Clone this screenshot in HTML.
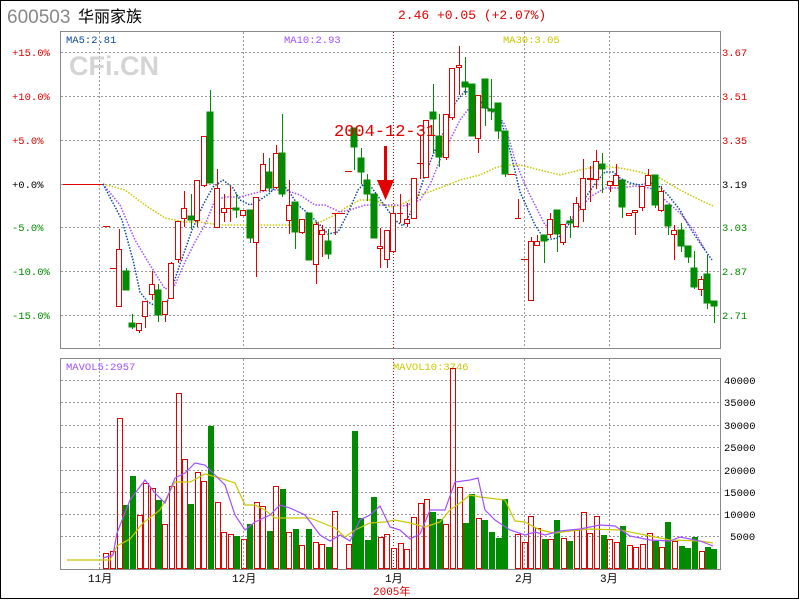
<!DOCTYPE html>
<html><head><meta charset="utf-8"><style>
html,body{margin:0;padding:0;background:#fff}
body{width:800px;height:600px;overflow:hidden}
svg text{font-family:"Liberation Mono",monospace}
</style></head><body>
<svg width="800" height="600" viewBox="0 0 800 600" xmlns="http://www.w3.org/2000/svg" shape-rendering="crispEdges">
<rect x="0.5" y="0.5" width="798" height="598" fill="#fff" stroke="#000"/>
<text x="7" y="23" font-size="19" fill="#888" style="font-family:'Liberation Sans',sans-serif">600503</text>
<text x="78" y="22" font-size="16" fill="#000" style="font-family:'Liberation Sans','Noto Sans CJK SC',sans-serif">华丽家族</text>
<text x="398" y="19" font-size="13" fill="#e00000">2.46 +0.05 (+2.07%)</text>
<rect x="60.5" y="31.5" width="660" height="317" fill="none" stroke="#888"/>
<rect x="60.5" y="358.5" width="660" height="211" fill="none" stroke="#888"/>
<g stroke="#999" stroke-dasharray="2,2">
<line x1="61" y1="52.5" x2="720" y2="52.5"/><line x1="61" y1="96.5" x2="720" y2="96.5"/><line x1="61" y1="140.5" x2="720" y2="140.5"/><line x1="61" y1="184.5" x2="720" y2="184.5"/><line x1="61" y1="227.5" x2="720" y2="227.5"/><line x1="61" y1="271.5" x2="720" y2="271.5"/><line x1="61" y1="315.5" x2="720" y2="315.5"/>
<line x1="61" y1="380.5" x2="720" y2="380.5"/><line x1="61" y1="402.5" x2="720" y2="402.5"/><line x1="61" y1="425.5" x2="720" y2="425.5"/><line x1="61" y1="447.5" x2="720" y2="447.5"/><line x1="61" y1="470.5" x2="720" y2="470.5"/><line x1="61" y1="492.5" x2="720" y2="492.5"/><line x1="61" y1="514.5" x2="720" y2="514.5"/><line x1="61" y1="536.5" x2="720" y2="536.5"/>
<line x1="99.5" y1="32" x2="99.5" y2="348"/><line x1="243.5" y1="32" x2="243.5" y2="348"/><line x1="524.5" y1="32" x2="524.5" y2="348"/><line x1="609.5" y1="32" x2="609.5" y2="348"/>
<line x1="99.5" y1="359" x2="99.5" y2="569"/><line x1="243.5" y1="359" x2="243.5" y2="569"/><line x1="524.5" y1="359" x2="524.5" y2="569"/><line x1="609.5" y1="359" x2="609.5" y2="569"/>
</g>
<g stroke="#e00000" stroke-dasharray="1,2"><line x1="393.5" y1="32" x2="393.5" y2="348"/><line x1="393.5" y1="359" x2="393.5" y2="569"/></g>
<text x="69" y="75" font-size="27" font-weight="bold" fill="#d4d4d4" style="font-family:'Liberation Sans',sans-serif">CFi.CN</text>
<g font-size="10.5">
<text x="12" y="56" fill="#e00000">+15.0%</text><text x="12" y="100" fill="#e00000">+10.0%</text><text x="12" y="144" fill="#e00000">+5.0%</text><text x="12" y="188" fill="#000">+0.0%</text><text x="12" y="231" fill="#008c00">-5.0%</text><text x="12" y="275" fill="#008c00">-10.0%</text><text x="12" y="319" fill="#008c00">-15.0%</text>
<text x="722" y="56" fill="#e00000">3.67</text><text x="722" y="100" fill="#e00000">3.51</text><text x="722" y="144" fill="#e00000">3.35</text><text x="722" y="188" fill="#000">3.19</text><text x="722" y="231" fill="#008c00">3.03</text><text x="722" y="275" fill="#008c00">2.87</text><text x="722" y="319" fill="#008c00">2.71</text>
<text x="724" y="384" fill="#000">40000</text><text x="724" y="406" fill="#000">35000</text><text x="724" y="429" fill="#000">30000</text><text x="724" y="451" fill="#000">25000</text><text x="724" y="474" fill="#000">20000</text><text x="724" y="496" fill="#000">15000</text><text x="724" y="518" fill="#000">10000</text><text x="730" y="540" fill="#000">5000</text>
<text x="66" y="43" fill="#0a4a9a">MA5:2.81</text><text x="284" y="43" fill="#a050ff">MA10:2.93</text><text x="503" y="43" fill="#c8c800">MA30:3.05</text>
<text x="66" y="370" fill="#a050ff">MAVOL5:2957</text><text x="393" y="370" fill="#c8c800">MAVOL10:3746</text>
</g>
<g font-size="11" fill="#000" style="font-family:'Liberation Sans','Noto Sans CJK SC',sans-serif">
<text x="88" y="582">11月</text><text x="232" y="582">12月</text><text x="385" y="582">1月</text><text x="515" y="582">2月</text><text x="600" y="582">3月</text>
<text x="373" y="595" fill="#e00000">2005年</text>
</g>
<line x1="63" y1="184.5" x2="103" y2="184.5" stroke="#e00000"/>
<g fill="none" stroke-dasharray="1.5,1.5" shape-rendering="auto" stroke-width="1.5">
<polyline stroke="#c8c800" points="103,184 125,190 145,205 165,218 185,222 200,222 220,225 245,225 270,225 300,225 320,222 335,215 345,208 360,200 375,200 390,207 400,205 420,195 440,188 460,180 480,175 495,168 505,165 520,165 540,170 560,175 580,170 600,166 620,168 640,172 660,178 680,190 700,200 713,206"/>
<polyline stroke="#a050ff" points="103,184 120,205 135,240 150,265 165,289 175,285 185,262 195,242 205,225 215,200 225,197 240,197 255,193 270,190 285,190 300,195 315,205 325,205 340,212 350,210 365,205 395,205 405,206 420,200 430,185 440,160 450,140 460,120 470,107 480,107 495,110 505,125 515,160 525,185 535,205 545,225 560,230 575,215 590,197 605,188 620,188 635,186 650,188 665,200 680,213 695,232 705,250"/>
<polyline stroke="#0a4a9a" points="103,184 122,220 133,260 140,292 148,302 158,307 168,300 178,270 192,230 203,205 213,187 223,180 233,188 240,200 250,205 260,200 270,193 280,182 288,190 298,205 310,215 320,225 328,234 338,232 348,213 358,190 365,183 372,188 382,202 395,220 403,226 415,205 425,175 435,150 445,130 455,103 465,91 473,95 485,106 500,117 510,150 520,192 535,225 545,240 558,238 565,230 575,215 585,198 598,180 605,172 613,172 620,178 630,183 640,185 650,183 660,187 668,195 680,210 690,228 700,243 712,260"/>
</g>
<g stroke="#e00000" fill="#fff">
<line x1="103" y1="226.5" x2="110" y2="226.5"/><line x1="110" y1="268.5" x2="116" y2="268.5"/>
<line x1="119.5" y1="229" x2="119.5" y2="307"/><rect x="116.5" y="249.5" width="5" height="57"/>
<line x1="139.5" y1="323" x2="139.5" y2="333"/><rect x="136.5" y="323.5" width="5" height="7"/>
<line x1="145.5" y1="301" x2="145.5" y2="328"/><rect x="142.5" y="301.5" width="5" height="15"/>
<line x1="152.5" y1="271" x2="152.5" y2="300"/><rect x="149.5" y="284.5" width="5" height="10"/>
<line x1="165.5" y1="301" x2="165.5" y2="322"/><rect x="162.5" y="301.5" width="5" height="13"/>
<line x1="171.5" y1="262" x2="171.5" y2="298"/><rect x="168.5" y="263.5" width="5" height="35"/>
<line x1="178.5" y1="221" x2="178.5" y2="263"/><rect x="175.5" y="221.5" width="5" height="38"/>
<line x1="184.5" y1="191" x2="184.5" y2="227"/><rect x="181.5" y="208.5" width="5" height="10"/>
<line x1="197.5" y1="180" x2="197.5" y2="227"/><rect x="194.5" y="180.5" width="5" height="40"/>
<line x1="204.5" y1="136" x2="204.5" y2="187"/><rect x="201.5" y="136.5" width="5" height="49"/>
<line x1="217.5" y1="169" x2="217.5" y2="227"/><rect x="214.5" y="188.5" width="5" height="39"/>
<line x1="224.5" y1="194" x2="224.5" y2="222"/><rect x="221.5" y="208.5" width="5" height="4"/>
<line x1="230.5" y1="186" x2="230.5" y2="222"/><line x1="227" y1="208.5" x2="233" y2="208.5"/>
<rect x="240.5" y="210.5" width="5" height="5"/>
<line x1="256.5" y1="197" x2="256.5" y2="277"/><rect x="253.5" y="197.5" width="5" height="45"/>
<line x1="263.5" y1="153" x2="263.5" y2="190"/><rect x="260.5" y="164.5" width="5" height="26"/>
<line x1="276.5" y1="145" x2="276.5" y2="189"/><rect x="273.5" y="153.5" width="5" height="34"/>
<line x1="289.5" y1="180" x2="289.5" y2="234"/><rect x="286.5" y="205.5" width="5" height="15"/>
<line x1="302.5" y1="219" x2="302.5" y2="234"/><rect x="299.5" y="219.5" width="5" height="13"/>
<line x1="316.5" y1="222" x2="316.5" y2="284"/><rect x="313.5" y="224.5" width="5" height="40"/>
<line x1="322.5" y1="225" x2="322.5" y2="257"/><rect x="319.5" y="230.5" width="5" height="4"/>
<line x1="332" y1="213.5" x2="345" y2="213.5"/><line x1="335.5" y1="213" x2="335.5" y2="235"/>
<line x1="345" y1="171.5" x2="352" y2="171.5"/>
<line x1="380.5" y1="228" x2="380.5" y2="268"/><rect x="377.5" y="246.5" width="5" height="2"/>
<line x1="387.5" y1="230" x2="387.5" y2="268"/><rect x="384.5" y="230.5" width="5" height="29"/>
<line x1="393.5" y1="207" x2="393.5" y2="253"/><rect x="390.5" y="213.5" width="5" height="38"/>
<line x1="400.5" y1="194" x2="400.5" y2="223"/><line x1="397" y1="213.5" x2="403" y2="213.5"/>
<line x1="407.5" y1="203" x2="407.5" y2="227"/><rect x="404.5" y="219.5" width="5" height="4"/>
<line x1="414.5" y1="178" x2="414.5" y2="218"/><rect x="411.5" y="178.5" width="5" height="40"/>
<line x1="420.5" y1="135" x2="420.5" y2="179"/><line x1="417" y1="163.5" x2="423" y2="163.5"/>
<line x1="426.5" y1="120" x2="426.5" y2="177"/><rect x="423.5" y="120.5" width="5" height="57"/>
<line x1="446.5" y1="114" x2="446.5" y2="160"/><rect x="443.5" y="114.5" width="5" height="43"/>
<line x1="452.5" y1="68" x2="452.5" y2="120"/><rect x="449.5" y="68.5" width="5" height="49"/>
<line x1="459.5" y1="46" x2="459.5" y2="95"/><rect x="456.5" y="65.5" width="5" height="2"/>
<line x1="478.5" y1="95" x2="478.5" y2="153"/><rect x="475.5" y="95.5" width="5" height="43"/>
<line x1="508" y1="174.5" x2="515" y2="174.5"/>
<line x1="518.5" y1="199" x2="518.5" y2="218"/><line x1="515" y1="218.5" x2="521" y2="218.5"/>
<line x1="521" y1="259.5" x2="528" y2="259.5"/>
<line x1="531.5" y1="237" x2="531.5" y2="300"/><rect x="528.5" y="241.5" width="5" height="59"/>
<line x1="537.5" y1="235" x2="537.5" y2="245"/><rect x="534.5" y="241.5" width="5" height="4"/>
<line x1="550.5" y1="213" x2="550.5" y2="238"/><rect x="547.5" y="219.5" width="5" height="15"/>
<line x1="563.5" y1="224" x2="563.5" y2="245"/><rect x="560.5" y="224.5" width="5" height="18"/>
<line x1="576.5" y1="197" x2="576.5" y2="226"/><rect x="573.5" y="203.5" width="5" height="23"/>
<line x1="583.5" y1="159" x2="583.5" y2="222"/><rect x="580.5" y="178.5" width="5" height="31"/>
<line x1="590.5" y1="166" x2="590.5" y2="202"/><rect x="587.5" y="178.5" width="5" height="1"/>
<line x1="596.5" y1="150" x2="596.5" y2="189"/><rect x="593.5" y="161.5" width="5" height="18"/>
<line x1="610.5" y1="181" x2="610.5" y2="192"/><rect x="607.5" y="181.5" width="5" height="4"/>
<line x1="616.5" y1="164" x2="616.5" y2="185"/><rect x="613.5" y="175.5" width="5" height="10"/>
<rect x="626.5" y="213.5" width="5" height="2"/>
<line x1="635.5" y1="210" x2="635.5" y2="235"/><rect x="632.5" y="210.5" width="5" height="2"/>
<line x1="642.5" y1="186" x2="642.5" y2="211"/><rect x="639.5" y="186.5" width="5" height="21"/>
<line x1="648.5" y1="169" x2="648.5" y2="185"/><rect x="645.5" y="175.5" width="5" height="10"/>
<line x1="661.5" y1="186" x2="661.5" y2="212"/><rect x="658.5" y="191.5" width="5" height="19"/>
<line x1="674.5" y1="225" x2="674.5" y2="260"/><rect x="671.5" y="230.5" width="5" height="4"/>
<line x1="701.5" y1="276" x2="701.5" y2="296"/><rect x="698.5" y="279.5" width="5" height="10"/>
</g>
<g stroke="#008c00" fill="#008c00">
<line x1="126.5" y1="268" x2="126.5" y2="290"/><rect x="123" y="271" width="6" height="19"/>
<line x1="132.5" y1="314" x2="132.5" y2="329"/><rect x="129" y="323" width="6" height="4"/>
<line x1="158.5" y1="284" x2="158.5" y2="322"/><rect x="155" y="290" width="6" height="25"/>
<line x1="191.5" y1="194" x2="191.5" y2="229"/><rect x="188" y="216" width="6" height="4"/>
<line x1="210.5" y1="90" x2="210.5" y2="183"/><rect x="207" y="112" width="6" height="71"/>
<line x1="236.5" y1="194" x2="236.5" y2="218"/><rect x="233" y="208" width="6" height="2"/>
<line x1="250.5" y1="210" x2="250.5" y2="243"/><rect x="247" y="210" width="6" height="28"/>
<line x1="269.5" y1="158" x2="269.5" y2="192"/><rect x="266" y="172" width="6" height="16"/>
<line x1="282.5" y1="114" x2="282.5" y2="197"/><rect x="279" y="153" width="6" height="41"/>
<line x1="295.5" y1="202" x2="295.5" y2="249"/><rect x="292" y="202" width="6" height="30"/>
<rect x="306" y="213" width="6" height="47"/>
<line x1="328.5" y1="229" x2="328.5" y2="259"/><rect x="325" y="241" width="6" height="13"/>
<line x1="354.5" y1="128" x2="354.5" y2="170"/><rect x="351" y="128" width="6" height="19"/>
<line x1="361.5" y1="148" x2="361.5" y2="184"/><rect x="358" y="158" width="6" height="14"/>
<line x1="367.5" y1="174" x2="367.5" y2="201"/><rect x="364" y="180" width="6" height="14"/>
<rect x="371" y="194" width="6" height="44"/>
<line x1="433.5" y1="84" x2="433.5" y2="153"/><rect x="430" y="112" width="6" height="7"/>
<line x1="439.5" y1="114" x2="439.5" y2="167"/><rect x="436" y="136" width="6" height="21"/>
<line x1="465.5" y1="57" x2="465.5" y2="95"/><rect x="462" y="82" width="6" height="5"/>
<rect x="469" y="84" width="6" height="52"/>
<line x1="485.5" y1="79" x2="485.5" y2="126"/><rect x="482" y="79" width="6" height="29"/>
<line x1="491.5" y1="79" x2="491.5" y2="120"/><rect x="488" y="109" width="6" height="2"/>
<line x1="498.5" y1="103" x2="498.5" y2="139"/><rect x="495" y="103" width="6" height="28"/>
<line x1="505.5" y1="131" x2="505.5" y2="177"/><rect x="502" y="131" width="6" height="43"/>
<line x1="544.5" y1="235" x2="544.5" y2="263"/><rect x="541" y="235" width="6" height="6"/>
<line x1="557.5" y1="210" x2="557.5" y2="252"/><rect x="554" y="210" width="6" height="24"/>
<line x1="570.5" y1="216" x2="570.5" y2="238"/><rect x="567" y="221" width="6" height="2"/>
<line x1="602.5" y1="153" x2="602.5" y2="193"/><rect x="599" y="164" width="6" height="5"/>
<line x1="622.5" y1="180" x2="622.5" y2="218"/><rect x="619" y="180" width="6" height="27"/>
<line x1="655.5" y1="175" x2="655.5" y2="208"/><rect x="652" y="175" width="6" height="30"/>
<line x1="668.5" y1="205" x2="668.5" y2="235"/><rect x="665" y="205" width="6" height="21"/>
<line x1="681.5" y1="223" x2="681.5" y2="252"/><rect x="678" y="230" width="6" height="16"/>
<line x1="688.5" y1="246" x2="688.5" y2="263"/><rect x="685" y="246" width="6" height="11"/>
<line x1="694.5" y1="251" x2="694.5" y2="289"/><rect x="691" y="268" width="6" height="19"/>
<line x1="707.5" y1="255" x2="707.5" y2="309"/><rect x="704" y="274" width="6" height="29"/>
<line x1="714.5" y1="301" x2="714.5" y2="323"/><rect x="711" y="301" width="6" height="5"/>
</g>
<text x="334" y="136" font-size="17" fill="#e00000">2004-12-31</text>
<rect x="384" y="146" width="3" height="36" fill="#e00000"/>
<polygon points="377,180 394,180 385.5,200" fill="#e00000" shape-rendering="auto"/>
<g stroke="#e00000" fill="none">
<rect x="103.5" y="553.5" width="5" height="15"/><rect x="110.5" y="551.5" width="5" height="17"/><rect x="117.5" y="418.5" width="5" height="150"/>
<rect x="137.5" y="515.5" width="5" height="53"/><rect x="143.5" y="483.5" width="5" height="85"/><rect x="150.5" y="488.5" width="5" height="80"/>
<rect x="162.5" y="524.5" width="5" height="44"/><rect x="169.5" y="486.5" width="5" height="82"/><rect x="176.5" y="393.5" width="5" height="175"/><rect x="182.5" y="459.5" width="5" height="109"/>
<rect x="195.5" y="472.5" width="5" height="96"/><rect x="201.5" y="481.5" width="5" height="87"/>
<rect x="215.5" y="502.5" width="5" height="66"/><rect x="221.5" y="532.5" width="5" height="36"/><rect x="228.5" y="534.5" width="5" height="34"/>
<rect x="241.5" y="539.5" width="5" height="29"/><rect x="254.5" y="502.5" width="5" height="66"/><rect x="260.5" y="506.5" width="5" height="62"/>
<rect x="273.5" y="486.5" width="5" height="82"/><rect x="286.5" y="532.5" width="5" height="36"/><rect x="299.5" y="545.5" width="5" height="23"/>
<rect x="313.5" y="542.5" width="5" height="26"/><rect x="319.5" y="544.5" width="5" height="24"/><rect x="332.5" y="511.5" width="5" height="57"/>
<rect x="346.5" y="544.5" width="5" height="24"/><rect x="378.5" y="537.5" width="5" height="31"/><rect x="384.5" y="534.5" width="5" height="34"/>
<rect x="391.5" y="548.5" width="5" height="20"/><rect x="398.5" y="543.5" width="5" height="25"/><rect x="404.5" y="549.5" width="5" height="19"/>
<rect x="411.5" y="517.5" width="5" height="51"/><rect x="418.5" y="503.5" width="5" height="65"/><rect x="424.5" y="499.5" width="5" height="69"/>
<rect x="443.5" y="524.5" width="5" height="44"/><rect x="450.5" y="368.5" width="5" height="200"/><rect x="457.5" y="487.5" width="5" height="81"/>
<rect x="476.5" y="518.5" width="5" height="50"/>
<rect x="515.5" y="534.5" width="5" height="34"/><rect x="522.5" y="542.5" width="5" height="26"/><rect x="528.5" y="516.5" width="5" height="52"/><rect x="535.5" y="528.5" width="5" height="40"/>
<rect x="548.5" y="539.5" width="5" height="29"/><rect x="561.5" y="538.5" width="5" height="30"/><rect x="574.5" y="530.5" width="5" height="38"/>
<rect x="581.5" y="512.5" width="5" height="56"/><rect x="587.5" y="533.5" width="5" height="35"/><rect x="594.5" y="516.5" width="5" height="52"/>
<rect x="607.5" y="539.5" width="5" height="29"/><rect x="614.5" y="542.5" width="5" height="26"/><rect x="627.5" y="545.5" width="5" height="23"/>
<rect x="633.5" y="547.5" width="5" height="21"/><rect x="640.5" y="544.5" width="5" height="24"/><rect x="647.5" y="533.5" width="5" height="35"/>
<rect x="659.5" y="547.5" width="5" height="21"/><rect x="672.5" y="541.5" width="5" height="27"/><rect x="699.5" y="551.5" width="5" height="17"/>
</g>
<g fill="#008c00">
<rect x="123" y="505" width="6" height="64"/><rect x="130" y="476" width="6" height="93"/><rect x="156" y="500" width="6" height="69"/>
<rect x="188" y="504" width="6" height="65"/><rect x="208" y="426" width="6" height="143"/><rect x="234" y="536" width="6" height="33"/>
<rect x="247" y="524" width="6" height="45"/><rect x="267" y="531" width="6" height="38"/><rect x="280" y="489" width="6" height="80"/>
<rect x="293" y="529" width="6" height="40"/><rect x="306" y="529" width="6" height="40"/><rect x="326" y="547" width="6" height="22"/>
<rect x="352" y="431" width="6" height="138"/><rect x="358" y="518" width="6" height="51"/><rect x="365" y="540" width="6" height="29"/>
<rect x="371" y="497" width="6" height="72"/><rect x="430" y="512" width="6" height="57"/><rect x="437" y="519" width="6" height="50"/>
<rect x="463" y="523" width="6" height="46"/><rect x="469" y="494" width="6" height="75"/><rect x="482" y="520" width="6" height="49"/>
<rect x="489" y="532" width="6" height="37"/><rect x="496" y="538" width="6" height="31"/><rect x="502" y="499" width="6" height="70"/>
<rect x="542" y="539" width="6" height="30"/><rect x="554" y="520" width="6" height="49"/><rect x="567" y="541" width="6" height="28"/>
<rect x="601" y="535" width="6" height="34"/><rect x="620" y="526" width="6" height="43"/><rect x="653" y="541" width="6" height="28"/>
<rect x="665" y="522" width="6" height="47"/><rect x="679" y="546" width="6" height="23"/><rect x="685" y="548" width="6" height="21"/>
<rect x="692" y="537" width="6" height="32"/><rect x="705" y="547" width="6" height="22"/><rect x="711" y="549" width="6" height="20"/>
</g>
<g fill="none" shape-rendering="auto" stroke-width="1.2">
<polyline stroke="#c8c800" points="67,560 110,560 117,546 130,539 143,523 160,510 175,482 190,482 205,474 220,478 235,483 245,505 255,505 265,510 275,518 310,518 325,524 335,528 345,537 355,530 370,523 385,522 395,520 410,523 425,527 440,522 450,510 460,503 470,495 480,497 505,500 515,521 525,522 540,530 555,533 570,531 590,529 620,530 650,536 670,540 700,541 713,543"/>
<polyline stroke="#a050ff" points="103,558 113,555 117,533 130,500 145,480 155,493 165,503 175,478 185,473 195,463 205,465 215,475 225,485 235,515 245,530 255,522 270,515 280,505 290,508 305,515 320,535 330,541 340,535 350,541 360,520 370,515 380,506 390,527 400,530 410,539 420,534 430,510 445,510 455,482 470,480 478,478 485,510 495,520 510,530 525,535 535,532 545,535 560,531 580,529 600,525 615,526 630,536 650,540 670,541 680,537 700,541 713,546"/>
</g>
</svg>
</body></html>
